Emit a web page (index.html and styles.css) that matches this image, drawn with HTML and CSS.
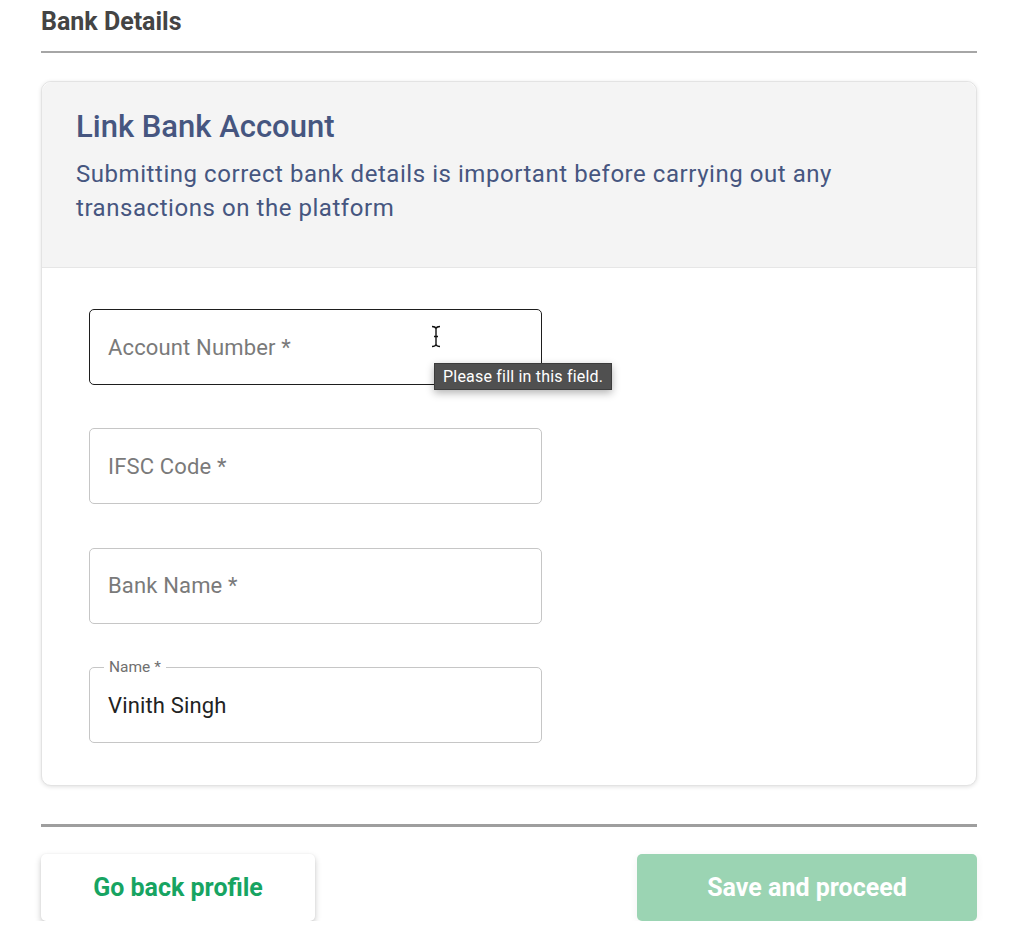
FILE: index.html
```html
<!DOCTYPE html>
<html lang="en">
<head>
<meta charset="utf-8">
<title>Bank Details</title>
<link rel="stylesheet" href="styles.css">
</head>
<body>
<main class="page">
  <h1 class="page-title">Bank Details</h1>
  <hr class="rule rule-top">
  <section class="card">
    <header class="card-head">
      <h2 class="card-title">Link Bank Account</h2>
      <p class="card-sub">Submitting correct bank details is important before carrying out any transactions on the platform</p>
    </header>
    <div class="card-body">
      <div class="field field-focus">
        <span class="placeholder">Account Number *</span>
        <svg class="ibeam" width="10" height="23" viewBox="0 0 10 23" aria-hidden="true">
          <path d="M1 1.5 C3 1.5 4.5 2 5 3.5 C5.5 2 7 1.5 9 1.5 M5 3.5 V19.5 M1 21.5 C3 21.5 4.5 21 5 19.5 C5.5 21 7 21.5 9 21.5 M3 11.5 H7" fill="none" stroke="#111" stroke-width="1.4"/>
        </svg>
        <div class="tooltip">Please fill in this field.</div>
      </div>
      <div class="field">
        <span class="placeholder">IFSC Code *</span>
      </div>
      <div class="field">
        <span class="placeholder">Bank Name *</span>
      </div>
      <div class="field field-filled">
        <span class="float-label">Name *</span>
        <span class="value">Vinith Singh</span>
      </div>
    </div>
  </section>
  <hr class="rule rule-bottom">
  <div class="actions">
    <button class="btn btn-back" type="button">Go back profile</button>
    <button class="btn btn-save" type="button">Save and proceed</button>
  </div>
</main>
</body>
</html>
```
FILE: styles.css
```css
* { box-sizing: border-box; }
html, body { margin: 0; padding: 0; background: #fff; }
body { font-family: Roboto, "Noto Sans", "Liberation Sans", sans-serif; }

.page {
  width: 936px;
  margin-left: 41px;
  padding-top: 7px;
}

.page-title {
  margin: 0;
  font-size: 25px;
  line-height: 30px;
  font-weight: 700;
  color: #444;
}

.rule {
  border: 0;
  margin: 0;
}
.rule-top {
  margin-top: 14px;
  border-top: 2px solid #a6a6a6;
}
.rule-bottom {
  margin-top: 38px;
  border-top: 3px solid #9e9e9e;
}

.card {
  margin-top: 28px;
  border: 1px solid #e3e3e3;
  border-radius: 10px;
  box-shadow: 0 1px 4px rgba(0,0,0,0.12);
  background: #fff;
}

.card-head {
  background: #f4f4f4;
  border-radius: 10px 10px 0 0;
  border-bottom: 1px solid #e6e6e6;
  padding: 27px 34px 42px;
  color: #465680;
}
.card-title {
  margin: 0;
  font-size: 31px;
  line-height: 36px;
  font-weight: 500;
}
.card-sub {
  margin: 12px 0 0;
  font-size: 24px;
  line-height: 34px;
  font-weight: 400;
  letter-spacing: 0.55px;
}

.card-body {
  padding: 41px 47px 42px;
  display: flex;
  flex-direction: column;
  gap: 43.4px;
}

.field {
  position: relative;
  width: 453px;
  height: 76px;
  border: 1px solid #c6c6c6;
  border-radius: 5px;
  display: flex;
  align-items: center;
  padding-left: 18px;
  font-size: 22px;
  letter-spacing: 0.15px;
}
.field-focus { border-color: #1e1e1e; }

.placeholder { color: #7a7a7a; }
.value { color: #222; }

.float-label {
  position: absolute;
  top: -11px;
  left: 14px;
  padding: 0 5px;
  background: #fff;
  font-size: 15.5px;
  line-height: 20px;
  letter-spacing: 0;
  color: #6f6f6f;
}

.ibeam {
  position: absolute;
  left: 341px;
  top: 15px;
}

.tooltip {
  position: absolute;
  left: 344px;
  top: 53px;
  height: 27px;
  padding: 0 8px;
  display: flex;
  align-items: center;
  background: #505050;
  color: #fff;
  font-size: 16px;
  letter-spacing: 0.2px;
  border: 1px solid #3c3c3c;
  box-shadow: 0 3px 8px rgba(0,0,0,0.3);
  white-space: nowrap;
  z-index: 2;
}

.actions {
  margin-top: 27px;
  display: flex;
  justify-content: space-between;
}

.btn {
  height: 67px;
  border: 0;
  border-radius: 5px;
  font-family: Roboto, "Noto Sans", "Liberation Sans", sans-serif;
  font-size: 25px;
  font-weight: 700;
  cursor: pointer;
}
.btn-back {
  width: 274px;
  background: #fff;
  color: #17a462;
  box-shadow: 0 3px 6px rgba(0,0,0,0.22), 0 0 2px rgba(0,0,0,0.06);
}
.btn-save {
  width: 340px;
  background: #9bd4b3;
  color: #fff;
  box-shadow: 0 2px 8px rgba(0,0,0,0.06);
}
```
